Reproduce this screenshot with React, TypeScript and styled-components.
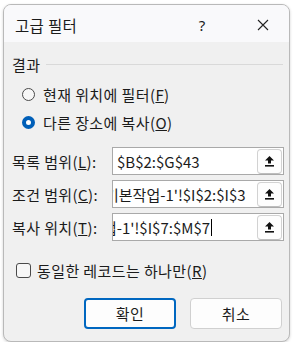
import React from 'react';
import styled, { createGlobalStyle } from 'styled-components';

const Global = createGlobalStyle`
  html, body { margin: 0; padding: 0; background: #ffffff; }
  body { font-family: "Noto Sans CJK KR", "Noto Sans", sans-serif; color: #1b1b1b; }
`;

const Dialog = styled.div`
  margin: 4px 0 0 3px;
  width: 287px;
  height: 338px;
  box-sizing: border-box;
  border: 1px solid #b9b9b9;
  border-radius: 8px;
  background: #f0f0f0;
  overflow: hidden;
  display: flex;
  flex-direction: column;
  box-shadow: 0 1px 3px rgba(0, 0, 0, 0.18);
`;

const TitleBar = styled.div`
  height: 37px;
  flex: none;
  background: #f9f9fb;
  display: flex;
  align-items: center;
  padding-left: 11px;
  font-size: 15.5px;
`;

const Title = styled.div`
  flex: 1;
  line-height: 20px;
  padding-top: 3px;
  letter-spacing: 0.3px;
`;

const Help = styled.div`
  width: 20px;
  text-align: center;
  font-size: 15px;
  line-height: 20px;
  padding-top: 2px;
  font-family: "Noto Sans", sans-serif;
  margin-right: 45px;
`;

const Close = styled.div`
  width: 12px;
  height: 12px;
  margin-right: 20px;
  margin-top: 2px;
  display: flex;
`;

const Body = styled.div`
  padding: 0 5px 0 8px;
  display: flex;
  flex-direction: column;
  font-size: 15px;
  letter-spacing: 0.4px;
`;

const GroupHeader = styled.div`
  margin-top: 12px;
  height: 20px;
  display: flex;
  align-items: center;
  gap: 6px;
  &::after {
    content: '';
    flex: 1;
    height: 1px;
    background: #d9d9d9;
    margin-right: 1px;
  }
`;

const OptionRow = styled.div<{ $top: number }>`
  margin-top: ${(p) => p.$top}px;
  height: 22px;
  display: flex;
  align-items: center;
  padding-left: 10px;
  gap: 8px;
`;

const Radio = styled.span<{ $checked?: boolean }>`
  width: 13px;
  height: 13px;
  box-sizing: border-box;
  border-radius: 50%;
  flex: none;
  border: ${(p) => (p.$checked ? '4px solid #005fb8' : '1px solid #4a4a4a')};
  background: ${(p) => (p.$checked ? '#ffffff' : '#f7f7f7')};
`;

const FieldRow = styled.div<{ $top: number }>`
  margin-top: ${(p) => p.$top}px;
  height: 28px;
  display: grid;
  grid-template-columns: 100px 1fr;
  align-items: center;
`;

const Field = styled.div`
  height: 28px;
  box-sizing: border-box;
  border: 1px solid #a9a9a9;
  background: #ffffff;
  display: flex;
  align-items: center;
  padding-right: 1px;
`;

const FieldText = styled.div`
  flex: 1;
  overflow: hidden;
  white-space: nowrap;
  display: flex;
  align-items: center;
  font-size: 15px;
  letter-spacing: 0;
  padding-left: 4px;
  height: 100%;
`;

const Scrolled = styled.span<{ $shift: number }>`
  margin-left: ${(p) => -p.$shift}px;
  flex: none;
`;

const Caret = styled.span`
  display: inline-block;
  width: 1px;
  height: 17px;
  background: #000;
  margin-left: 1px;
  flex: none;
`;

const PickButton = styled.div`
  width: 25px;
  height: 25px;
  box-sizing: border-box;
  border: 1px solid #d2d2d2;
  border-bottom-color: #bdbdbd;
  border-radius: 4px;
  background: #fdfdfd;
  display: flex;
  align-items: center;
  justify-content: center;
  flex: none;
`;

const CheckRow = styled.div`
  margin-top: 19px;
  height: 20px;
  display: flex;
  align-items: center;
  gap: 6px;
  padding-left: 4px;
`;

const Box = styled.span`
  width: 15px;
  height: 15px;
  box-sizing: border-box;
  border: 1px solid #4a4a4a;
  border-radius: 3px;
  background: #f7f7f7;
  flex: none;
`;

const Buttons = styled.div`
  margin-top: 18px;
  display: flex;
  justify-content: flex-end;
  gap: 14px;
  padding-right: 2px;
`;

const Button = styled.div<{ $primary?: boolean }>`
  width: 92px;
  height: 31px;
  box-sizing: border-box;
  border-radius: 4px;
  background: #fdfdfd;
  border: ${(p) => (p.$primary ? '2px solid #0067c0' : '1px solid #d0d0d0')};
  display: flex;
  align-items: center;
  justify-content: center;
`;

const UpIcon = () => (
  <svg width="11" height="12" viewBox="0 0 11 12">
    <path d="M5.5 1 L10 5.6 H7 V8.6 H4 V5.6 H1 Z" fill="#111" />
    <rect x="1" y="10" width="9" height="1.6" fill="#111" />
  </svg>
);

const CloseIcon = () => (
  <svg width="12" height="12" viewBox="0 0 12 12">
    <path d="M1 1 L11 11 M11 1 L1 11" stroke="#222" strokeWidth="1.1" />
  </svg>
);

export default function App() {
  return (
    <>
      <Global />
      <Dialog>
        <TitleBar>
          <Title>고급 필터</Title>
          <Help>?</Help>
          <Close>
            <CloseIcon />
          </Close>
        </TitleBar>
        <Body>
          <GroupHeader>결과</GroupHeader>
          <OptionRow $top={9}>
            <Radio />
            <span>
              현재 위치에 필터(<u>F</u>)
            </span>
          </OptionRow>
          <OptionRow $top={6}>
            <Radio $checked />
            <span>
              다른 장소에 복사(<u>O</u>)
            </span>
          </OptionRow>
          <FieldRow $top={14}>
            <span>
              목록 범위(<u>L</u>):
            </span>
            <Field>
              <FieldText>$B$2:$G$43</FieldText>
              <PickButton>
                <UpIcon />
              </PickButton>
            </Field>
          </FieldRow>
          <FieldRow $top={5}>
            <span>
              조건 범위(<u>C</u>):
            </span>
            <Field>
              <FieldText>
                <Scrolled $shift={12}>기본작업-1'!$I$2:$I$3</Scrolled>
              </FieldText>
              <PickButton>
                <UpIcon />
              </PickButton>
            </Field>
          </FieldRow>
          <FieldRow $top={5}>
            <span>
              복사 위치(<u>T</u>):
            </span>
            <Field>
              <FieldText>
                <Scrolled $shift={14}>업-1'!$I$7:$M$7</Scrolled>
                <Caret />
              </FieldText>
              <PickButton>
                <UpIcon />
              </PickButton>
            </Field>
          </FieldRow>
          <CheckRow>
            <Box />
            <span>
              동일한 레코드는 하나만(<u>R</u>)
            </span>
          </CheckRow>
          <Buttons>
            <Button $primary>확인</Button>
            <Button>취소</Button>
          </Buttons>
        </Body>
      </Dialog>
    </>
  );
}
